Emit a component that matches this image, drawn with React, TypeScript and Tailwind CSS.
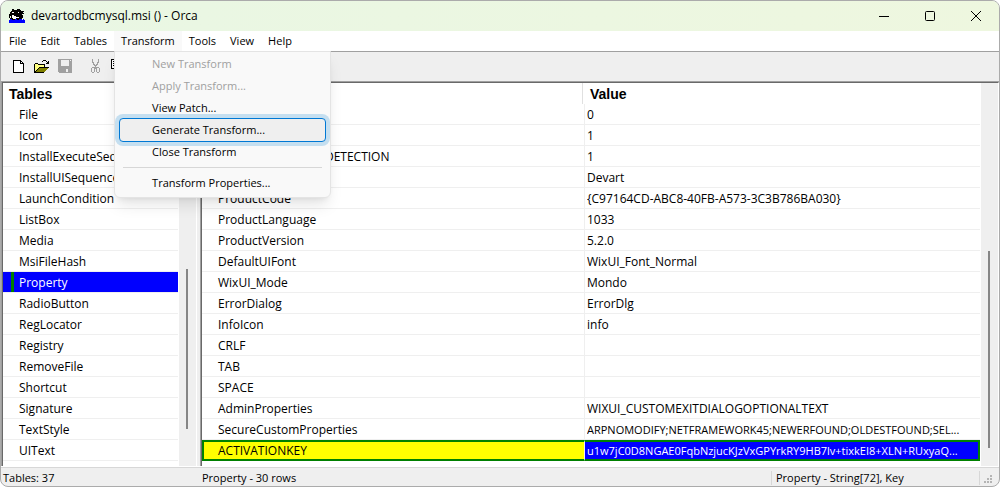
import React from "react";

const menus = ["File", "Edit", "Tables", "Transform", "Tools", "View", "Help"];

const tables = [
  "File", "Icon", "InstallExecuteSequence", "InstallUISequence", "LaunchCondition", "ListBox",
  "Media", "MsiFileHash", "Property", "RadioButton", "RegLocator", "Registry", "RemoveFile",
  "Shortcut", "Signature", "TextStyle", "UIText",
];

type Row = { name: string; value: string; long?: boolean };

const rows: Row[] = [
  { name: "ALLUSERS", value: "0" },
  { name: "ARPNOREPAIR", value: "1" },
  { name: "DISABLE_VERSION_DETECTION", value: "1" },
  { name: "Manufacturer", value: "Devart" },
  { name: "ProductCode", value: "{C97164CD-ABC8-40FB-A573-3C3B786BA030}" },
  { name: "ProductLanguage", value: "1033" },
  { name: "ProductVersion", value: "5.2.0" },
  { name: "DefaultUIFont", value: "WixUI_Font_Normal" },
  { name: "WixUI_Mode", value: "Mondo" },
  { name: "ErrorDialog", value: "ErrorDlg" },
  { name: "InfoIcon", value: "info" },
  { name: "CRLF", value: "" },
  { name: "TAB", value: "" },
  { name: "SPACE", value: "" },
  { name: "AdminProperties", value: "WIXUI_CUSTOMEXITDIALOGOPTIONALTEXT" },
  { name: "SecureCustomProperties", value: "ARPNOMODIFY;NETFRAMEWORK45;NEWERFOUND;OLDESTFOUND;SEL...", long: true },
  { name: "ACTIVATIONKEY", value: "u1w7jC0D8NGAE0FqbNzjucKJzVxGPYrkRY9HB7lv+tixkEI8+XLN+RUxyaQ...", long: true },
];

const dropdown = [
  { label: "New Transform", disabled: true },
  { label: "Apply Transform...", disabled: true },
  { label: "View Patch..." },
  { label: "Generate Transform...", active: true },
  { label: "Close Transform" },
];

function OrcaIcon() {
  return (
    <svg width="16" height="14" viewBox="0 0 16 14" shapeRendering="crispEdges" aria-hidden="true">
      <path fill="#000" d="M3 0h2v1h3V0h3v1h1v1h3v1h-1v1h1v1h-2v1h1v3h-1v2H1V9H0V5h1V3h1V2h1z" />
      <path fill="#fff" d="M3 3h2v1H3zM3 6h2v1h2v1h3v1H7v1H4V9H3zM9 3h1v1H9z" />
      <path fill="#e9f7e4" d="M1 7h1v2H1z" />
      <path fill="#00f" d="M0 11h1v-1h2v1h3v-1h2v1h2v-1h3v1h1v-1h1v1h1v3H0z" />
    </svg>
  );
}

function NewIcon() {
  return (
    <svg width="12" height="13" viewBox="0 0 12 13" shapeRendering="crispEdges" aria-hidden="true">
      <path fill="#000" d="M0 0h8v1h1v1h1v1h1v10H0z" />
      <path fill="#fff" d="M1 1h6v3h3v8H1zM8 2h1v1H8z" />
    </svg>
  );
}

function OpenIcon() {
  return (
    <svg width="16" height="13" viewBox="0 0 16 13" shapeRendering="crispEdges" aria-hidden="true">
      <path fill="#000" d="M9 0h3v1H9zM8 1h1v1H8zM12 1h1v1h1V1h1v3h-3V3h1V2h-1zM1 3h3v1h7v3h4v1h-1v1h-1v1h-1v1h-1v1h-1v1H0V4h1z" />
      <path fill="#ffff80" d="M1 4h3v1h6v2H5v1H4v1H3v1H2v1H1z" />
      <path fill="#808000" d="M5 8h9v1h-1v1h-1v1h-1v1H2v-1h1v-1h1V9h1z" />
    </svg>
  );
}

function SaveIcon() {
  return (
    <svg width="14" height="14" viewBox="0 0 14 14" shapeRendering="crispEdges" aria-hidden="true">
      <path fill="#a0a0a0" fillRule="evenodd" d="M0 0h14v14H1v-1H0zM3 1v6h8V1zM8 10v3h2v-3zM12 1v1h1V1z" />
    </svg>
  );
}

function CutIcon() {
  return (
    <svg width="9" height="14" viewBox="0 0 9 14" shapeRendering="crispEdges" aria-hidden="true">
      <path fill="#a0a0a0" fillRule="evenodd" d="M1 0h1v3h1v2h1v1h1V5h1V3h1V0h1v4H7v2H6v1H5v1h3v1h1v4H8v1H6v-1H5v-3H4v3H3v1H1v-1H0V9h1V8h3V7H3V6H2V4H1zM1 9v4h2V9zM6 9v4h2V9z" />
    </svg>
  );
}

function CopyIcon() {
  return (
    <svg width="15" height="14" viewBox="0 0 15 14" shapeRendering="crispEdges" aria-hidden="true">
      <path fill="#000" d="M0 0h7v1h1v9H0zM6 4h7v1h1v9H6z" />
      <path fill="#fff" d="M1 1h6v8H1zM7 5h6v8H7z" />
      <path fill="#000" d="M2 2h3v1H2zM2 4h4v1H2zM2 6h4v1H2z" />
    </svg>
  );
}

function ToolButton({ label, children }: { label: string; children: React.ReactNode }) {
  return (
    <button type="button" aria-label={label} className="flex h-6 w-[23px] items-center justify-center">
      {children}
    </button>
  );
}

function TransformMenu() {
  return (
    <div
      role="menu"
      className="absolute top-5 left-0 z-10 w-[217px] rounded-b-md border border-[#e4e4e4] bg-[#f9f9f9] pt-px pb-[3px] shadow-lg"
    >
      {dropdown.map((d) => (
        <button
          key={d.label}
          type="button"
          role="menuitem"
          disabled={d.disabled}
          className={`mx-1 flex w-[207px] items-center rounded-sm border pl-8 ${
            d.active ? "relative -my-px h-6 border-[#0078d4] bg-[#efefef] ring-4 ring-[#c5dff0]" : "h-[22px] border-transparent"
          } ${d.disabled ? "text-[#a0a0a0]" : ""}`}
        >
          {d.label}
        </button>
      ))}
      <hr className="mx-2 my-1 border-[#d7d7d7]" />
      <button type="button" role="menuitem" className="mx-1 flex h-[22px] items-center border border-transparent pl-8">
        Transform Properties...
      </button>
    </div>
  );
}

export default function App() {
  return (
    <div className="flex h-screen flex-col overflow-hidden rounded-lg border border-[#ababab] bg-[#efefef] font-['Open_Sans','Noto_Sans',sans-serif] text-xs text-black">
      <header className="flex h-[30px] shrink-0 items-center bg-gradient-to-r from-[#e9f7e4] to-[#eef7df] pl-2">
        <OrcaIcon />
        <h1 className="ml-[6px] flex-1 font-normal">devartodbcmysql.msi () - Orca</h1>
        <button type="button" aria-label="Minimize" className="flex h-full w-[46px] items-center justify-center">
          <svg width="10" height="10"><path d="M0 5.5h10" stroke="#000" /></svg>
        </button>
        <button type="button" aria-label="Maximize" className="flex h-full w-[46px] items-center justify-center">
          <svg width="10" height="10"><rect x=".5" y=".5" width="9" height="9" rx="1" fill="none" stroke="#000" /></svg>
        </button>
        <button type="button" aria-label="Close" className="flex h-full w-[46px] items-center justify-center">
          <svg width="10" height="10"><path d="M0 0l10 10M10 0L0 10" stroke="#000" /></svg>
        </button>
      </header>

      <nav className="flex h-5 shrink-0 bg-white pl-px text-[11px]">
        {menus.map((m) => (
          <div key={m} className="relative">
            <button type="button" className={`h-5 px-[7px] leading-5 ${m === "Transform" ? "bg-[#f9f9f9]" : ""}`}>
              {m}
            </button>
            {m === "Transform" && <TransformMenu />}
          </div>
        ))}
      </nav>

      <div className="flex h-[30px] shrink-0 items-center border-t border-[#a0a0a0] pb-px pl-[6px]">
        <ToolButton label="New"><NewIcon /></ToolButton>
        <ToolButton label="Open"><OpenIcon /></ToolButton>
        <ToolButton label="Save"><SaveIcon /></ToolButton>
        <div className="w-2" />
        <ToolButton label="Cut"><CutIcon /></ToolButton>
        <ToolButton label="Copy"><CopyIcon /></ToolButton>
      </div>

      <main className="flex min-h-0 flex-1 gap-[3px]">
        <section className="flex w-[196px] shrink-0 border-t border-l border-[#a0a0a0]">
          <div className="flex min-w-0 flex-1 border-t border-r border-l border-t-[#696969] border-r-white border-l-[#696969] bg-white">
            <div className="min-w-0 flex-1 overflow-hidden">
              <h2 className="h-[21px] pl-[6px] font-['Liberation_Sans',sans-serif] text-sm leading-[22px] font-bold">Tables</h2>
              <ul className="mr-px">
                {tables.map((t) => (
                  <li key={t} className={`flex h-[21px] border-b border-[#efefef] ${t === "Property" ? "bg-[#00f] text-white" : ""}`}>
                    <span className={`ml-2 w-[3px] shrink-0 ${t === "Property" ? "bg-[#008000]" : ""}`} />
                    <span className="ml-[5px] leading-[22px]">{t}</span>
                  </li>
                ))}
              </ul>
            </div>
            <div className="w-[17px] bg-[#efefef]">
              <div className="mt-[186px] ml-[7px] h-[160px] w-[2px] bg-[#868686]" />
            </div>
          </div>
        </section>
        <section className="flex min-w-0 flex-1 border-t border-l border-[#a0a0a0]">
          <div className="flex min-w-0 flex-1 border-t border-r border-l border-t-[#696969] border-r-white border-l-[#696969] bg-white">
            <div className="min-w-0 flex-1 overflow-hidden pr-px">
              <table className="w-full table-fixed border-separate border-spacing-0 text-left">
                <thead className="font-['Liberation_Sans',sans-serif] text-sm">
                  <tr>
                    <th className="h-[21px] w-[383px] p-0">
                      <div className="mr-[2px] h-[21px] border-r border-[#e0e0e0] pl-[6px] leading-[22px]">Property</div>
                    </th>
                    <th className="h-[21px] p-0">
                      <div className="h-[21px] pl-[5px] leading-[22px]">Value</div>
                    </th>
                  </tr>
                </thead>
                <tbody>
                  {rows.map(({ name, value, long }) => {
                    const selected = name === "ACTIVATIONKEY";
                    return (
                      <tr key={name}>
                        <td
                          className={`h-[21px] border-r border-r-[#efefef] p-0 ${
                            selected ? "border-y-2 border-l-2 border-y-[#008000] border-l-[#008000] bg-[#ff0] pl-[14px]" : "border-b border-b-[#efefef] pl-4"
                          }`}
                        >
                          <div className={selected ? "h-[17px] leading-[18px]" : "h-5 leading-[22px]"}>{name}</div>
                        </td>
                        <td
                          className={`h-[21px] p-0 pl-[2px] ${
                            selected ? "border-y-2 border-r-2 border-[#008000] bg-[#00f] text-white" : "border-b border-b-[#efefef]"
                          }`}
                        >
                          <div className={`truncate ${long ? "text-[11px]" : ""} ${selected ? "h-[17px] leading-[18px]" : "h-5 leading-[22px]"}`}>
                            {value}
                          </div>
                        </td>
                      </tr>
                    );
                  })}
                </tbody>
              </table>
            </div>
            <div className="w-[17px] bg-[#efefef]">
              <div className="mt-[168px] ml-[7px] h-[197px] w-[2px] bg-[#868686]" />
            </div>
          </div>
        </section>
      </main>

      <footer className="shrink-0 border-t border-white text-[11px]">
        <div className="flex h-[19px] items-center border-t border-[#d7d7d7] pt-[2px]">
          <span className="w-[199px] pl-[2px]">Tables: 37</span>
          <span className="flex-1 pl-[2px]">Property - 30 rows</span>
          <span className="w-[209px] border-x border-[#d7d7d7] pl-1">Property - String[72], Key</span>
          <svg className="mx-1 self-end" width="11" height="11" viewBox="0 0 11 11" shapeRendering="crispEdges" aria-hidden="true">
            <path fill="#b4b4b4" d="M6 0h2v2H6zM3 3h2v2H3zM6 3h2v2H6zM0 6h2v2H0zM3 6h2v2H3zM6 6h2v2H6z" />
          </svg>
        </div>
      </footer>
    </div>
  );
}
